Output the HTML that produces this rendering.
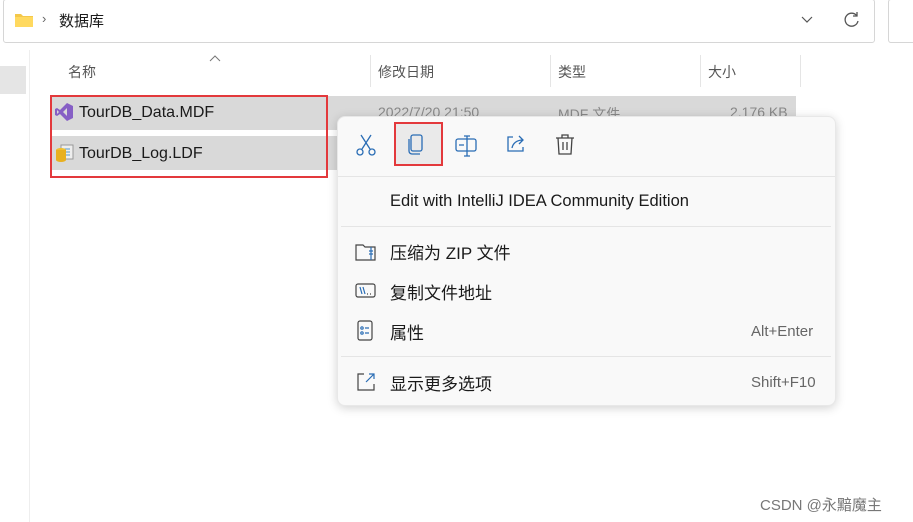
<!DOCTYPE html>
<html><head><meta charset="utf-8"><style>
*{margin:0;padding:0;box-sizing:border-box}
body{width:913px;height:522px;background:#fff;position:relative;overflow:hidden;font-family:"Liberation Sans","Noto Sans CJK SC",sans-serif;color:#1a1a1a}
.abs{position:absolute}
.t{font-size:16px;white-space:nowrap}
.h{font-size:14px;color:#555;white-space:nowrap}
.sep{position:absolute;background:#e5e5e5;height:1px}
svg{position:absolute}
</style></head><body>
<div class="abs" style="left:3px;top:-1px;width:872px;height:44px;border:1px solid #d6d6d6;border-radius:3px"></div>
<div class="abs" style="left:888px;top:-1px;width:40px;height:44px;border:1px solid #d6d6d6;border-radius:3px"></div>
<svg style="left:14px;top:12px" width="20" height="16"><path d="M1 2h6l2 2h10v11H1z" fill="#f4c84a"/><path d="M1 5h18v10H1z" fill="#ffd95f"/></svg>
<div class="abs t" style="left:42px;top:11px;font-size:13px;color:#666">›</div>
<div class="abs t" style="left:59px;top:10px;font-size:15px">数据库</div>
<svg style="left:800px;top:14px" width="14" height="10"><path d="M2 3l5 5 5-5" stroke="#555" fill="none" stroke-width="1.2"/></svg>
<svg style="left:843px;top:11px" width="18" height="18"><path d="M14 5A6.5 6.5 0 1 0 15 10" stroke="#555" fill="none" stroke-width="1.3"/><path d="M14 1v4h-4" stroke="#555" fill="none" stroke-width="1.3"/></svg>
<div class="abs" style="left:0;top:66px;width:26px;height:28px;background:#e5e5e5"></div>
<div class="abs" style="left:29px;top:50px;width:1px;height:472px;background:#eee"></div>
<svg style="left:208px;top:55px" width="14" height="8"><path d="M2 6l5-5 5 5" stroke="#777" fill="none" stroke-width="1"/></svg>
<div class="abs h" style="left:68px;top:62px">名称</div>
<div class="abs" style="left:370px;top:55px;width:1px;height:32px;background:#e5e5e5"></div>
<div class="abs h" style="left:378px;top:62px">修改日期</div>
<div class="abs" style="left:550px;top:55px;width:1px;height:32px;background:#e5e5e5"></div>
<div class="abs h" style="left:558px;top:62px">类型</div>
<div class="abs" style="left:700px;top:55px;width:1px;height:32px;background:#e5e5e5"></div>
<div class="abs h" style="left:708px;top:62px">大小</div>
<div class="abs" style="left:800px;top:55px;width:1px;height:32px;background:#e5e5e5"></div>
<div class="abs" style="left:52px;top:96px;width:744px;height:34px;background:#d9d9d9"></div>
<div class="abs" style="left:52px;top:136px;width:290px;height:34px;background:#d9d9d9"></div>
<div class="abs h" style="left:378px;top:104px;color:#888">2022/7/20 21:50</div>
<div class="abs h" style="left:558px;top:104px;color:#888">MDF 文件</div>
<div class="abs h" style="left:730px;top:104px;color:#888">2,176 KB</div>
<svg style="left:54px;top:102px" width="20" height="20"><path d="M13 1l6 3v12l-6 3-7-7-3 2-2-1V7l2-1 3 2z" fill="#865fc5"/><path d="M13 6v8l-4-4z" fill="#d9d9d9"/><path d="M3 8l2 2-2 2z" fill="#d9d9d9"/></svg>
<div class="abs t" style="left:79px;top:104px">TourDB_Data.MDF</div>
<svg style="left:55px;top:144px" width="20" height="20"><rect x="6" y="1" width="12" height="14" fill="#eee" stroke="#999"/><path d="M9 5h6M9 8h6M9 11h6" stroke="#59c"/><ellipse cx="6" cy="6" rx="5" ry="2" fill="#f0c030"/><rect x="1" y="6" width="10" height="10" fill="#e8b020"/><ellipse cx="6" cy="16" rx="5" ry="2" fill="#e8b020"/></svg>
<div class="abs t" style="left:79px;top:145px">TourDB_Log.LDF</div>
<div class="abs" style="left:50px;top:95px;width:278px;height:83px;border:2px solid #e3393c"></div>
<div class="abs" style="left:337px;top:116px;width:499px;height:290px;background:#f9f9f9;border-radius:8px;box-shadow:0 2px 10px rgba(0,0,0,.18);border:1px solid #e8e8e8"></div>
<svg style="left:355px;top:134px" width="22" height="24" fill="none" stroke="#2a6db5" stroke-width="1.3"><path d="M6 1l9 14M16 1l-9 14"/><circle cx="5" cy="18" r="3"/><circle cx="17" cy="18" r="3"/></svg>
<div class="abs" style="left:394px;top:122px;width:49px;height:44px;background:#eaeaea;border:2px solid #e3393c"></div>
<svg style="left:406px;top:134px" width="20" height="22" fill="none" stroke="#2a6db5" stroke-width="1.3"><rect x="5" y="1" width="11" height="16" rx="2"/><path d="M3 5v12a3 3 0 0 0 3 3h8"/></svg>
<svg style="left:455px;top:135px" width="24" height="22" fill="none" stroke="#2a6db5" stroke-width="1.3"><rect x="1" y="4" width="20" height="12" rx="2"/><path d="M12 1v20M9 1h6M9 21h6M4 10h5"/></svg>
<svg style="left:505px;top:133px" width="22" height="22" fill="none" stroke="#2a6db5" stroke-width="1.3"><path d="M8 4H3v14h15v-4"/><path d="M7 15c1-5 5-8 11-8M14 3l4 4-4 4"/></svg>
<svg style="left:555px;top:134px" width="20" height="22" fill="none" stroke="#444" stroke-width="1.3"><path d="M1 4h18M7 4V1h6v3M3 4l1 16h12l1-16M8 8v8M12 8v8"/></svg>
<div class="sep" style="left:338px;top:176px;width:497px"></div>
<div class="abs t" style="left:390px;top:192px;font-size:16.5px">Edit with IntelliJ IDEA Community Edition</div>
<div class="sep" style="left:341px;top:226px;width:490px"></div>
<svg style="left:355px;top:242px" width="22" height="20" fill="none" stroke="#444" stroke-width="1.2"><path d="M1 3h7l2 2h10v13H1z"/><path d="M16 5v13M14 9h4M14 12h4" stroke="#2a6db5"/></svg>
<div class="abs t" style="left:390px;top:239px;font-size:17px">压缩为 ZIP 文件</div>
<svg style="left:355px;top:282px" width="22" height="18" fill="none" stroke="#444" stroke-width="1.2"><rect x="1" y="2" width="19" height="13" rx="2"/><path d="M5 5l2 7M8 5l2 7" stroke="#2a6db5"/><path d="M12 12h1M15 12h1"/></svg>
<div class="abs t" style="left:390px;top:279px;font-size:17px">复制文件地址</div>
<svg style="left:357px;top:320px" width="18" height="22" fill="none" stroke="#444" stroke-width="1.2"><rect x="1" y="1" width="14" height="19" rx="2"/><circle cx="5" cy="8" r="1.2" stroke="#2a6db5"/><circle cx="5" cy="13" r="1.2" stroke="#2a6db5"/><path d="M8 8h4M8 13h4" stroke="#2a6db5"/></svg>
<div class="abs t" style="left:390px;top:319px;font-size:17px">属性</div>
<div class="abs h" style="left:751px;top:323px;color:#666;font-size:15px">Alt+Enter</div>
<div class="sep" style="left:341px;top:356px;width:490px"></div>
<svg style="left:356px;top:372px" width="20" height="20" fill="none" stroke="#444" stroke-width="1.2"><path d="M8 2H2v16h16v-6"/><path d="M10 10l8-8M13 2h5v5" stroke="#2a6db5"/></svg>
<div class="abs t" style="left:390px;top:370px;font-size:17px">显示更多选项</div>
<div class="abs h" style="left:751px;top:374px;color:#666;font-size:15px">Shift+F10</div>
<div class="abs" style="left:760px;top:494px;font-size:15px;color:#777;white-space:nowrap">CSDN @永黯魔主</div>
</body></html>
